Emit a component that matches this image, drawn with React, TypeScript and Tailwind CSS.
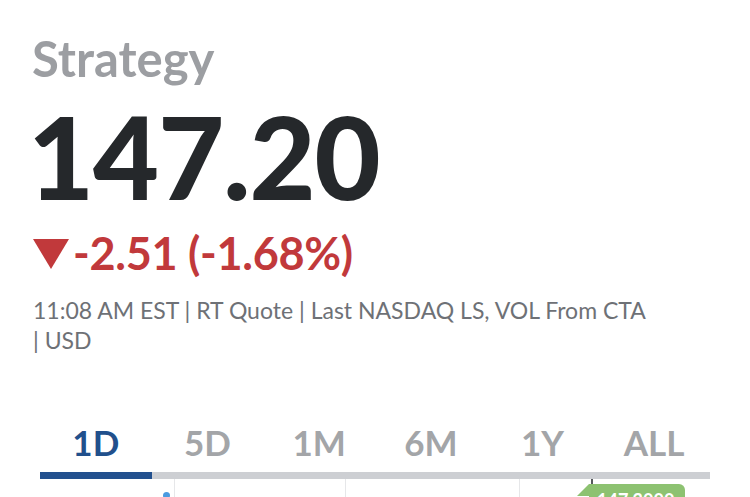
import React from "react";

export default function App() {
  const tabs = ["1D", "5D", "1M", "6M", "1Y", "ALL"];
  return (
    <div className="w-[750px] h-[497px] overflow-hidden bg-white" style={{ fontFamily: "Lato, 'Liberation Sans', sans-serif" }}>
      <div className="pl-[33px] pt-[29px]">
        <div className="text-[49px] leading-[58px] font-bold text-[#9c9ea2] -ml-[1px]">Strategy</div>
        <div className="mt-[12px] -ml-[5px] text-[114px] leading-[114px] font-black text-[#25282b] tracking-[-1px]">147.20</div>
        <div className="mt-[15px] flex items-center text-[45px] leading-[50px] font-bold text-[#c1393b]">
          <svg width="36" height="30" viewBox="0 0 36 30" className="mr-[4px] mt-[2px]">
            <polygon points="0,0 36,0 18,30" fill="#c1393b" />
          </svg>
          <span className="tracking-[-0.3px]">-2.51 (-1.68%)</span>
        </div>
        <div className="mt-[17px] w-[680px] text-[23px] leading-[30px] text-[#6e7176]">
          <div>11:08 AM EST | RT Quote | Last NASDAQ LS, VOL From CTA</div>
          <div>| USD</div>
        </div>
      </div>
      <div className="mx-[40px] mt-[67px] w-[670px]">
        <div className="grid grid-cols-6">
          {tabs.map((t, i) => (
            <div key={t} className={`text-center text-[35px] leading-[40px] font-bold ${i === 0 ? "text-[#21508c]" : "text-[#a3a5a8]"}`}>{t}</div>
          ))}
        </div>
        <div className="mt-[10px] h-[7px] bg-[#cdcfd3] flex">
          <div className="w-[112px] h-full bg-[#22508e]" />
        </div>
        <div className="relative flex h-[20px]">
          <div className="w-[135px] border-r border-[#e6e7e9]" />
          <div className="w-[171px] border-r border-[#e6e7e9]" />
          <div className="w-[174px] border-r border-[#e6e7e9]" />
          <div className="flex-1 pl-[71px]">
            <div className="h-[6px] w-[2px] bg-[#55585c]" />
          </div>
          <div className="absolute left-[123px] top-[13px] w-[7px] h-[7px] rounded-full bg-[#4a9be0]" />
          <div className="absolute left-[537px] top-[5px] flex items-start">
            <svg width="12" height="12" viewBox="0 0 12 12">
              <polygon points="12,0 12,12 0,12" fill="#8dc271" />
            </svg>
            <div className="h-[20px] w-[96px] bg-[#8dc271] rounded-tr-[6px] text-white text-[18px] font-bold leading-[20px] pl-[8px] pt-[6px]">147.2000</div>
          </div>
        </div>
      </div>
    </div>
  );
}
